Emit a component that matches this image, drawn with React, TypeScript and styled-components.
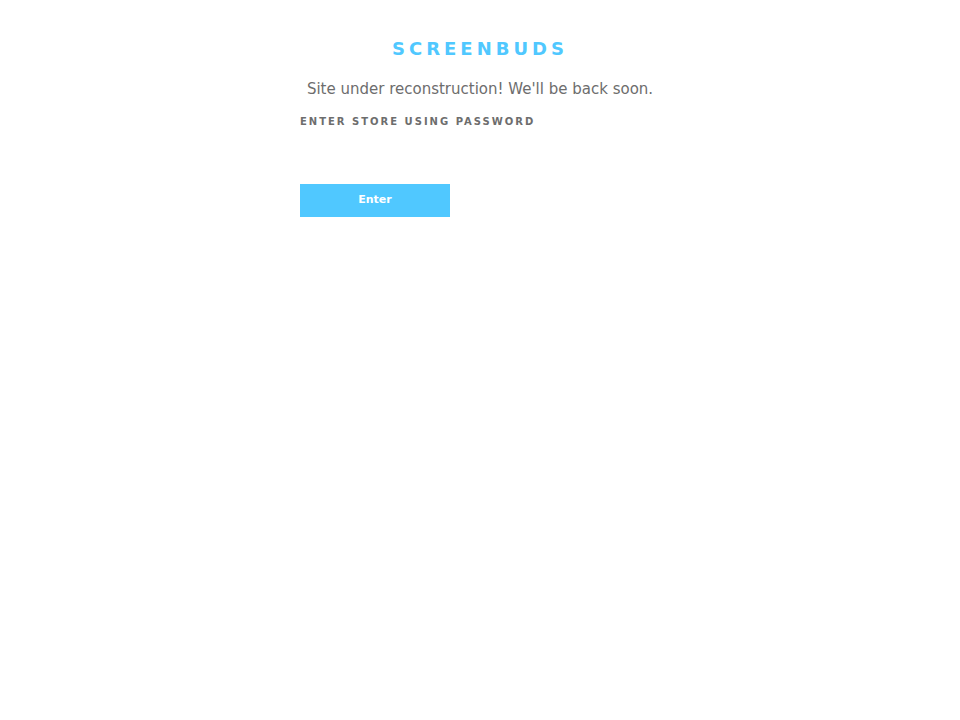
import * as React from "react";
import styled, { createGlobalStyle } from "styled-components";

const GlobalStyle = createGlobalStyle`
  *, *::before, *::after {
    box-sizing: border-box;
  }
  body {
    margin: 0;
    background-color: #ffffff;
    color: #6d6d6d;
    font-family: "DejaVu Sans", sans-serif;
  }
`;

const Page = styled.main`
  width: 100%;
  max-width: 400px;
  margin: 0 auto;
  padding: 36px 20px;
`;

const Title = styled.h1`
  margin: 0 0 16px;
  color: #50c8ff;
  font-size: 18px;
  line-height: 26px;
  letter-spacing: 4px;
  text-align: center;
  text-transform: uppercase;
`;

const Message = styled.p`
  margin: 0 0 14px;
  font-size: 15px;
  line-height: 22px;
  text-align: center;
`;

const Form = styled.form`
  display: flex;
  flex-direction: column;
`;

const Label = styled.label`
  margin-bottom: 10px;
  font-size: 10px;
  font-weight: bold;
  line-height: 16px;
  letter-spacing: 2px;
  text-transform: uppercase;
`;

const PasswordInput = styled.input`
  width: 100%;
  height: 34px;
  margin-bottom: 10px;
  padding: 8px 10px;
  border: 0;
  background: transparent;
  color: inherit;
  font: inherit;
`;

const Button = styled.button`
  width: 150px;
  padding: 8px 10px 9px;
  border: 0;
  background-color: #50c8ff;
  color: white;
  font-family: inherit;
  font-size: 11px;
  font-weight: bold;
  line-height: 16px;
  cursor: pointer;
`;

const App = () => {
  const [password, setPassword] = React.useState("");

  const handleSubmit = (e: React.FormEvent) => {
    e.preventDefault();
    setPassword("");
  };

  return (
    <>
      <GlobalStyle />
      <Page>
        <Title>Screenbuds</Title>
        <Message>Site under reconstruction! We'll be back soon.</Message>
        <Form onSubmit={handleSubmit}>
          <Label htmlFor="password">Enter store using password</Label>
          <PasswordInput
            id="password"
            type="password"
            value={password}
            onChange={(e) => setPassword(e.target.value)}
          />
          <Button type="submit">Enter</Button>
        </Form>
      </Page>
    </>
  );
};

export default App;
